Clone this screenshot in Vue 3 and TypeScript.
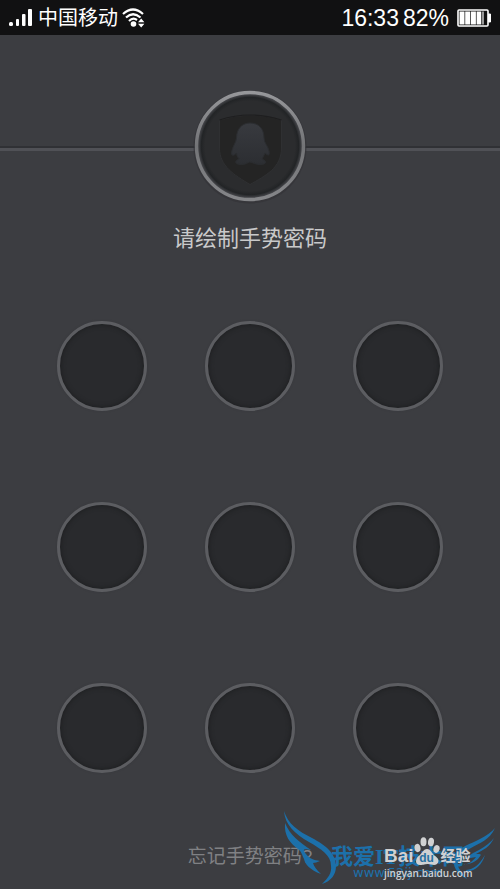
<script setup lang="ts">
import { ref } from 'vue'

const carrier = '中国移动'
const time = '16:33'
const battery = '82%'
const pattern = ref<number[]>([])

function pick(n: number) {
  if (!pattern.value.includes(n)) pattern.value.push(n)
}
</script>

<template>
  <main class="screen">
    <header class="status">
      <div class="group">
        <svg class="signal" width="24" height="20" viewBox="0 0 24 20" fill="#fff" aria-hidden="true">
          <rect x="0" y="14" width="4" height="4" rx="1.5" />
          <rect x="7" y="11" width="3" height="7" rx="1" />
          <rect x="13" y="6" width="3.500" height="12" rx="1" />
          <rect x="19" y="1" width="4" height="17" rx="1" />
        </svg>
        <span class="carrier">{{ carrier }}</span>
        <svg width="24" height="20" viewBox="0 0 24 20" fill="none" stroke="#fff" aria-hidden="true">
          <path d="M1 6Q11-3 21 6" stroke-width="2.2" />
          <path d="M4 9.500Q11 3 18.500 9.500" stroke-width="2.2" />
          <path d="M7 13Q11 9 15 12" stroke-width="2.2" />
          <circle cx="11.500" cy="16" r="2.800" fill="#fff" stroke="none" />
          <path d="M16 14.200 19.200 10.500 22.400 14.200zM16 15.800 19.200 19.500 22.400 15.800z" fill="#fff" stroke="none" />
        </svg>
      </div>
      <div class="group right">
        <span class="clock">{{ time }}</span>
        <span class="clock">{{ battery }}</span>
        <svg class="battery" width="35" height="18" viewBox="0 0 35 18" aria-hidden="true">
          <rect x="1" y="1" width="30" height="16" rx="1" fill="#111" stroke="#fff" stroke-width="1.600" />
          <path d="M31.500 5h2v8h-2z" fill="#fff" stroke="#fff" />
          <path d="M2.500 2.500h5v13h-5zM8.200 2.500h5v13h-5zM13.900 2.500h5v13h-5zM19.600 2.500h4.400v13h-4.400z" fill="#fff" />
          <path d="M24.500 2.500h2.500v13h-2.500z" fill="#999" />
        </svg>
      </div>
    </header>

    <section class="brand">
      <svg class="badge" width="116" height="116" viewBox="0 0 116 116" aria-hidden="true">
        <defs>
          <linearGradient id="ring" x2="0" y2="1">
            <stop offset="0" stop-color="#96979a" />
            <stop offset="0.5" stop-color="#737477" />
            <stop offset="1" stop-color="#858689" />
          </linearGradient>
          <linearGradient id="bird" x2="0" y2="1">
            <stop offset="0" stop-color="#383a3f" />
            <stop offset="1" stop-color="#2c2e32" />
          </linearGradient>
          <radialGradient id="well">
            <stop offset="0.84" stop-color="#2b2c2e" />
            <stop offset="0.91" stop-color="#222426" />
            <stop offset="0.96" stop-color="#404145" />
            <stop offset="1" stop-color="#4c4d51" />
          </radialGradient>
        </defs>
        <circle cx="58" cy="58" r="56.500" fill="#323337" opacity="0.65" />
        <circle cx="58" cy="57" r="53.500" fill="url(#well)" stroke="url(#ring)" stroke-width="3.400" />
        <path d="M27.500 31Q58 21 89.500 31V59C89.500 79 73 87 58 95.500C42 86 27.500 77 27.500 59Z" fill="#242424" stroke="#2f3032" />
        <path d="M27.500 31Q58 21 89.500 31" fill="none" stroke="#1e1e1f" stroke-width="1.200" />
        <path d="M58 34C49 34 44.500 41 44.500 49C44.500 53 40 58 39.500 64C39.500 68 43 66 44.500 64C44.500 67 47 70 47 70C42 72 43 75 48 75.500C53 76 57 73 58 73C60 73 64 76 69 75.500C75 75 75 72 70 70L73 64C76 67 78 67 77 62C76 57 72 54 72 49C72 40 67 34 58 34Z" fill="url(#bird)" stroke="#2b2d30" />
      </svg>
    </section>

    <h1 class="prompt">请绘制手势密码</h1>

    <section class="grid" aria-label="手势密码">
      <button v-for="n in 9" :key="n" type="button" class="dot" :aria-label="String(n)" @click="pick(n)"></button>
    </section>

    <footer class="footer">
      <a class="forgot" href="#">忘记手势密码?</a>
    </footer>

    <div class="site-mark">
      <svg class="wings" width="215" height="76" viewBox="0 0 215 76" fill="#1c70aa" aria-hidden="true">
        <path d="M1 0C5 13 15 20 29 27C42 34 53 42 53 55C53 64 48 70 39 73C45 67 49 62 48 55C48 44 38 38 26 31C12 23 2 14 1 0Z" />
        <path d="M2 12C7 24 16 31 28 39C19 37 20 39 23 43C27 48 31 49 37 50C34 51 32 52 30 52C31 56 34 59 38 63C27 59 22 53 21 48C19 44 19 41 15 38C7 32 1 25 2 12Z" />
        <path d="M212 17C207 29 196 32 188 37C178 42 171 50 177 59L184 68C174 63 168 54 172 46C176 35 188 33 197 28C204 24 209 21 212 17Z" />
        <path d="M211 27C207 36 200 39 193 43C199 43 199 43 195 48C191 52 185 53 180 54C186 53 190 50 193 46L182 48C188 43 190 42 196 39C203 35 208 31 211 27Z" />
        <path d="M202 44C199 54 193 59 184 61L183 59C191 58 196 54 202 44Z" />
      </svg>
      <span class="site-name">我爱IT技术网</span>
      <span class="site-url">www.52ij.com</span>
    </div>

    <div class="baidu-mark">
      <div class="baidu-row">
        <span class="bai">Bai</span>
        <svg class="paw" width="26" height="29" viewBox="0 0 26 29" fill="#d0d1d2" aria-hidden="true">
          <ellipse cx="3.500" cy="11" rx="3" ry="4.200" transform="rotate(-12 3.500 11)" />
          <ellipse cx="9.500" cy="4.800" rx="3" ry="4.500" />
          <ellipse cx="17" cy="5" rx="3" ry="4.300" transform="rotate(8 17 5)" />
          <ellipse cx="22.500" cy="12" rx="3" ry="4" transform="rotate(18 22.500 12)" />
          <path d="M13 12C9 12 8 17 4.500 19C1 22 1 28 6 28C10 28 11 27 14 27C17 27 20 29 23 27C26 24 24 21 21 19C18 17 17 12 13 12Z" />
        </svg>
        <span class="du">du</span>
        <span class="exp">经验</span>
      </div>
      <span class="baidu-url">jingyan.baidu.com</span>
    </div>
  </main>
</template>

<style>
body {
  background: #3c3d41;
}
</style>

<style scoped>
.screen {
  position: relative;
  display: flex;
  flex-direction: column;
  box-sizing: border-box;
  min-height: 100vh;
  overflow: hidden;
  background: #3c3d41;
  font-family: "Liberation Sans", "Noto Sans CJK SC", sans-serif;
}
.status {
  display: flex;
  align-items: center;
  justify-content: space-between;
  height: 35px;
  padding: 0 8px 0 9px;
  background: #111112;
  color: #fff;
}
.group {
  display: flex;
  align-items: center;
  gap: 4px;
}
.signal {
  margin-right: 1px;
}
.carrier {
  font-size: 20px;
  line-height: 32px;
}
.clock {
  font-size: 23px;
  line-height: 36px;
}
.battery {
  margin-left: 4px;
}
.brand {
  display: flex;
  justify-content: center;
  margin-top: 54px;
  background: linear-gradient(transparent 57px, #303135 57px, #303135 59px, #505156 59px, #505156 62px, transparent 62px);
}
.badge {
  display: block;
}
.prompt {
  margin: 18px 0 0;
  color: #c9c9ca;
  font-size: 22px;
  font-weight: 400;
  line-height: 32px;
  text-align: center;
}
.grid {
  display: grid;
  grid-template-columns: repeat(3, 90px);
  justify-content: center;
  gap: 91px 58px;
  margin-top: 66px;
}
.dot {
  width: 90px;
  height: 90px;
  padding: 0;
  border: 3px solid #5c5d61;
  border-radius: 50%;
  background: #292a2d;
  box-shadow: inset 0 0 4px 1px #1f2022, 0 0 2px #37383c;
}
.footer {
  display: flex;
  justify-content: center;
  margin-top: 68px;
  padding-bottom: 16px;
}
.forgot {
  color: #808184;
  font-size: 19px;
  line-height: 32px;
  text-decoration: none;
}
.site-mark {
  position: absolute;
  right: 2px;
  bottom: 3px;
  width: 215px;
  height: 75px;
  color: #1c70aa;
  pointer-events: none;
}
.wings {
  position: absolute;
  inset: 0;
}
.site-name {
  position: absolute;
  top: 32px;
  left: 48px;
  font-family: "Liberation Serif", "Noto Sans CJK SC", serif;
  font-size: 22px;
  font-weight: 700;
  line-height: 28px;
  white-space: nowrap;
}
.site-url {
  position: absolute;
  top: 52px;
  left: 70px;
  font-family: "DejaVu Sans", sans-serif;
  font-size: 13px;
  line-height: 20px;
}
.baidu-mark {
  position: absolute;
  right: 28px;
  bottom: 9px;
  display: flex;
  flex-direction: column;
  width: 88px;
  color: #d0d1d2;
  white-space: nowrap;
  pointer-events: none;
}
.baidu-row {
  display: flex;
  align-items: flex-end;
  height: 29px;
}
.bai {
  font-size: 19px;
  font-weight: 700;
  line-height: 20px;
}
.paw {
  flex: none;
}
.du {
  flex: none;
  width: 26px;
  margin-left: -26px;
  color: #2870a0;
  font-size: 12px;
  font-weight: 700;
  line-height: 15px;
  text-align: center;
}
.exp {
  margin-left: 1px;
  font-size: 15px;
  font-weight: 700;
  line-height: 20px;
}
.baidu-url {
  font-family: "Open Sans", sans-serif;
  font-size: 10px;
  font-weight: 600;
  line-height: 14px;
}
</style>
